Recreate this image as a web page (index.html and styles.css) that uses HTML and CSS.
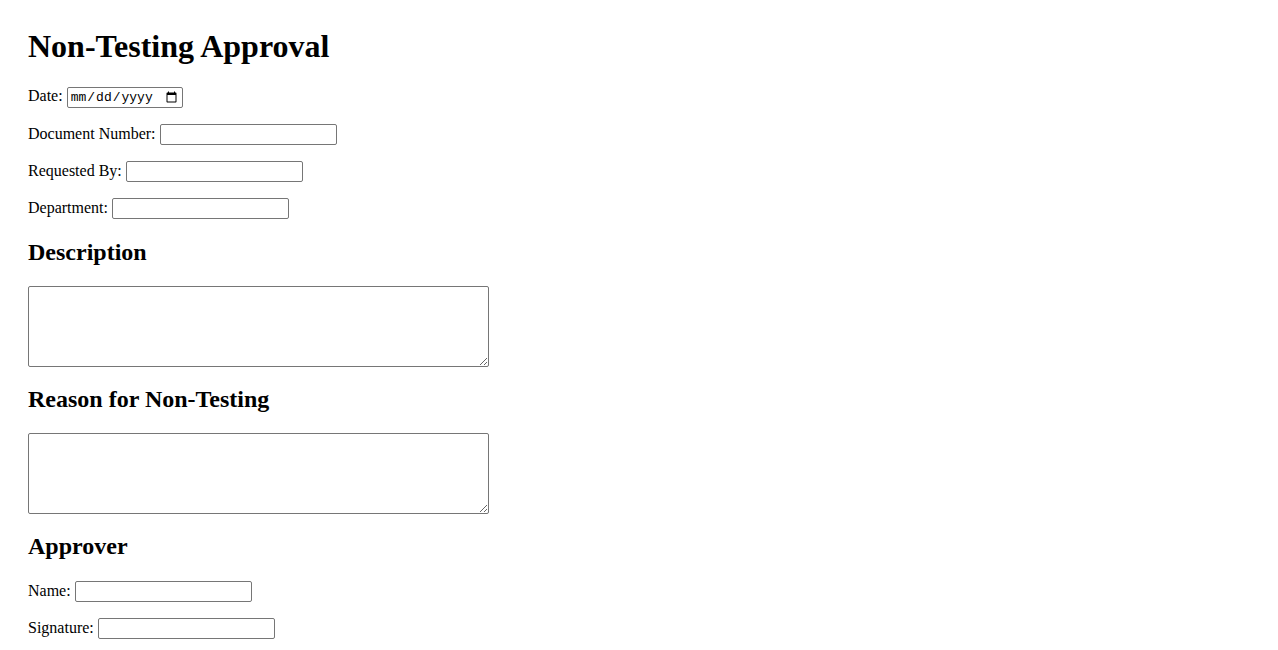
FILE: index.html
```html
<!DOCTYPE html>
<html>

<head>
  <meta charset="utf-8" />
  <title>Non-Testing Approval</title>
  <link rel="stylesheet" href="styles.css">
</head>

<body>
  <div class="page">
    <h1>Non-Testing Approval</h1>

    <div class="field">
      <label for="date">Date:</label>
      <input type="date" id="date" class="date-input" />
    </div>
    <div class="field">
      <label for="doc-number">Document Number:</label>
      <input type="text" id="doc-number" class="text-input" />
    </div>
    <div class="field">
      <label for="requested-by">Requested By:</label>
      <input type="text" id="requested-by" class="text-input" />
    </div>
    <div class="field">
      <label for="department">Department:</label>
      <input type="text" id="department" class="text-input" />
    </div>

    <h2>Description</h2>
    <textarea class="text-area"></textarea>

    <h2>Reason for Non-Testing</h2>
    <textarea class="text-area"></textarea>

    <h2 class="approver-title">Approver</h2>
    <div class="field">
      <label for="approver-name">Name:</label>
      <input type="text" id="approver-name" class="text-input" />
    </div>
    <div class="field">
      <label for="signature">Signature:</label>
      <input type="text" id="signature" class="text-input" />
    </div>
  </div>
</body>

</html>
```

FILE: styles.css
```css
body {
  margin: 8px;
  font-family: "Liberation Serif", "Times New Roman", serif;
  font-size: 16px;
  color: #000;
  background: #fff;
}

.page {
  padding: 20px;
}

h1 {
  margin: 0 0 22px;
  font-size: 32px;
}

h2 {
  margin: 0.83em 0;
  font-size: 24px;
}

/* a touch tighter after the text boxes */
.text-area + h2 {
  margin-top: 19px;
}

.approver-title {
  margin-bottom: 21px;
}

.field {
  margin-bottom: 16px;
}

.text-input,
.date-input {
  box-sizing: border-box;
  height: 21px;
  margin: 0;
  border: 1px solid #767676;
  border-radius: 2px;
  vertical-align: baseline;
}

.text-input {
  width: 177px;
}

.date-input {
  width: 116px;
  padding: 1px 2px;
  font-family: "Liberation Mono", monospace;
  font-size: 13px;
}

.text-area {
  display: block;
  box-sizing: border-box;
  width: 461px;
  height: 81px;
  margin: 0;
  border: 1px solid #767676;
  border-radius: 2px;
}
```
